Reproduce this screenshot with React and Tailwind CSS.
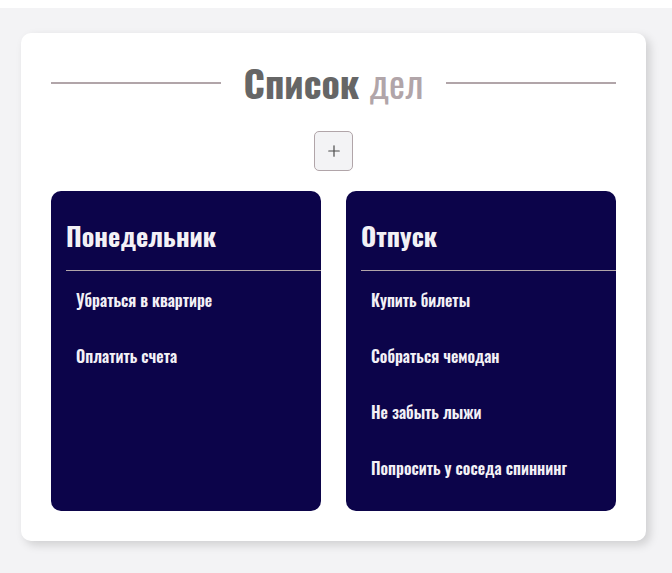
import React from 'react';
import { Plus } from 'lucide-react';

const font = { fontFamily: '"Oswald", "DejaVu Sans Condensed", "Liberation Sans", sans-serif' };

const lists = [
  { title: 'Понедельник', items: ['Убраться в квартире', 'Оплатить счета'] },
  { title: 'Отпуск', items: ['Купить билеты', 'Собраться чемодан', 'Не забыть лыжи', 'Попросить у соседа спиннинг'] },
];

function Column({ title, items }) {
  return (
    <div className="h-[320px] rounded-[10px] bg-[#0c044a] text-[#f3f1f6]">
      <div className="h-[79px] pl-[15px] pt-[10px] flex items-center">
        <h2 className="text-[26px] font-bold leading-none">{title}</h2>
      </div>
      <div className="ml-[15px] h-px bg-[#b1a5a9]" />
      <ul className="mt-px">
        {items.map((item) => (
          <li key={item} className="h-[56px] pl-[25px] flex items-center text-[16px] font-semibold whitespace-nowrap">
            {item}
          </li>
        ))}
      </ul>
    </div>
  );
}

export default function App() {
  return (
    <div className="bg-white pt-2" style={font}>
      <div className="min-h-[565px] bg-[#f3f3f5] pl-[21px] pt-[25px]">
        <div className="w-[625px] rounded-[10px] bg-white px-[30px] pt-[30px] pb-[30px] shadow-[4px_4px_10px_rgba(0,0,0,0.15)]">
          {/* Header */}
          <div className="h-[40px] flex items-center gap-[23px]">
            <div className="flex-1 h-[2px] bg-[#b1a5a9]" />
            <h1 className="text-[38px] font-bold leading-none -mt-[3px]">
              <span className="text-[#666666]">Список</span>{' '}
              <span className="text-[#b1a5a9] font-normal">дел</span>
            </h1>
            <div className="flex-1 h-[2px] bg-[#b1a5a9]" />
          </div>

          <div className="mt-[28px] flex justify-center">
            <button className="w-[39px] h-[40px] rounded-[5px] border border-[#b1a5a9] bg-[#f3f3f5] flex items-center justify-center text-[#4a4a4a]">
              <Plus className="w-[18px] h-[18px]" strokeWidth={1.6} />
            </button>
          </div>

          <div className="mt-[20px] grid grid-cols-2 gap-[25px]">
            {lists.map((l) => (
              <Column key={l.title} {...l} />
            ))}
          </div>
        </div>
      </div>
    </div>
  );
}
